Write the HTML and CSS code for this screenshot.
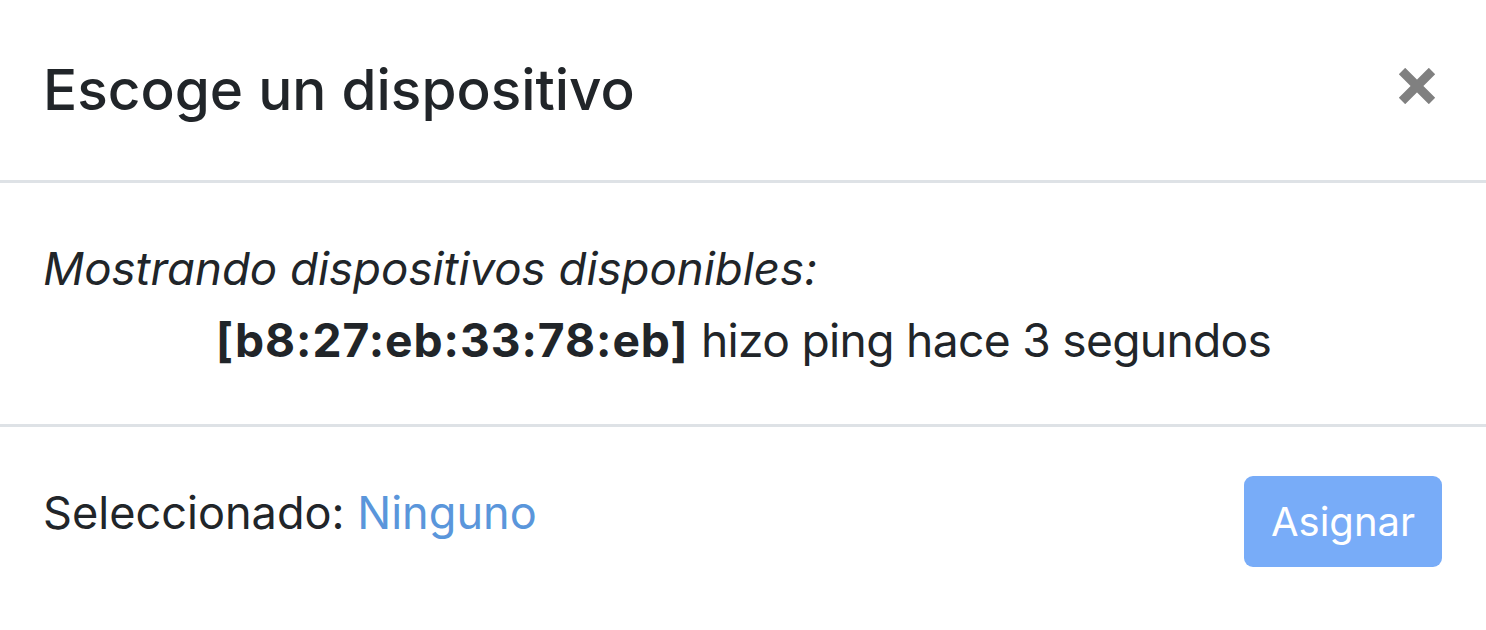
FILE: index.html
```html
<!DOCTYPE html>
<html lang="es">
<head>
<meta charset="utf-8">
<title>Escoge un dispositivo</title>
<link rel="stylesheet" href="styles.css">
</head>
<body>
<div class="modal">
  <div class="modal-header">
    <h4 class="modal-title">Escoge un dispositivo</h4>
    <button class="close" type="button" aria-label="Close">
      <svg width="38" height="36" viewBox="0 0 38 36"><path d="M4 3 L34 33 M34 3 L4 33" stroke="#808080" stroke-width="9" fill="none"/></svg>
    </button>
  </div>
  <div class="modal-body">
    <p class="intro">Mostrando dispositivos disponibles:</p>
    <p class="device"><strong>[b8:27:eb:33:78:eb]</strong> hizo ping hace 3 segundos</p>
  </div>
  <div class="modal-footer">
    <span class="selected">Seleccionado: <span class="none">Ninguno</span></span>
    <button class="btn" type="button" disabled>Asignar</button>
  </div>
</div>
</body>
</html>
```
FILE: styles.css
```css
html, body {
  margin: 0;
  padding: 0;
  background: #fff;
}
body {
  font-family: Inter, "Noto Sans", sans-serif;
  color: #212529;
}
.modal {
  display: flex;
  flex-direction: column;
}
.modal-header {
  display: flex;
  justify-content: space-between;
  align-items: center;
  padding: 54px 50px 54px 43px;
  border-bottom: 3px solid #dee2e6;
}
.modal-title {
  margin: 0;
  font-size: 56.7px;
  font-weight: 500;
  line-height: 72px;
}
.close {
  border: 0;
  background: none;
  padding: 0;
  margin-bottom: 8px;
  display: flex;
}
.modal-body {
  padding: 52px 42px 50px 43px;
}
.modal-body p {
  margin: 0;
}
.intro {
  font-style: italic;
  font-size: 45.6px;
  line-height: 68px;
}
.device {
  margin-top: 3px !important;
  text-align: center;
  font-size: 46.2px;
  line-height: 68px;
  letter-spacing: -0.7px;
}
.device strong {
  font-weight: 700;
  letter-spacing: 0.95px;
}
.modal-footer {
  display: flex;
  justify-content: space-between;
  align-items: center;
  padding: 49px 44px 40px 43px;
  border-top: 3px solid #dee2e6;
}
.selected {
  font-size: 45.1px;
  line-height: 68px;
  margin-bottom: 18px;
}
.none {
  color: #5a96db;
}
.btn {
  font-family: Inter, "Noto Sans", sans-serif;
  width: 198px;
  height: 91px;
  border: 0;
  border-radius: 9px;
  background: #78acf8;
  color: #fff;
  font-size: 40px;
  padding: 0;
}
```
